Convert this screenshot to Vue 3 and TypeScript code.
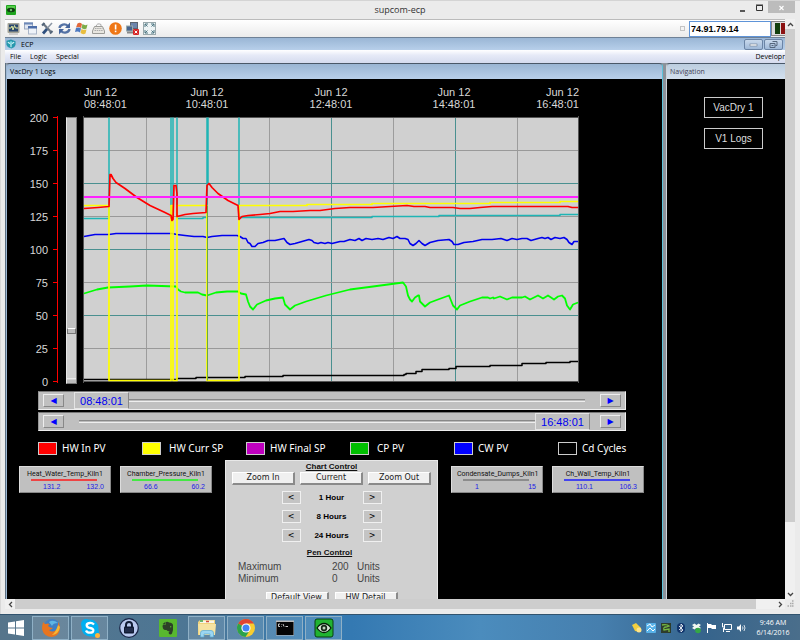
<script setup lang="ts">
import { ref } from 'vue'

interface Pen { name: string; low: string; high: string; color: string }
interface LegendItem { label: string; color: string; loose?: boolean }

const address = ref('74.91.79.14')
const zoomLevel = ref(19)
const startPos = ref(0)
const endPos = ref(100)

const menus = ['File', 'Logic', 'Special']
const tools = ['monitor', 'windows', 'tools', 'refresh', 'flag', 'keyboard', 'alert', 'disconnect', 'fullscreen']

const times = [
  { x: 84, hour: '08:48:01', anchor: 'start' },
  { x: 207, hour: '10:48:01', anchor: 'middle' },
  { x: 331, hour: '12:48:01', anchor: 'middle' },
  { x: 454, hour: '14:48:01', anchor: 'middle' },
  { x: 579, hour: '16:48:01', anchor: 'end' },
]
const levels = [200, 175, 150, 125, 100, 75, 50, 25, 0].map((value, i) => ({ value, y: 117 + i * 33 }))
const columns = [146, 207, 269, 331, 393, 455, 517]

const red = '84,208 98,207 109,206 110,174 111,174 113,178 116,182 125,188 137,197 150,205 165,212 171,215 172,220 173,219 174,185 176,185 177,193 177,216 185,214 193,213 206,212 207,185 209,183 212,187 218,193 228,200 238,205 239,219 242,216 248,215 260,214 270,213 280,211 293,211 310,210 320,210 335,208 350,207 373,207 390,206 407,205 414,206 425,206 430,207 453,207 460,208 470,208 480,207 492,206 540,206 568,206 572,207 578,207'
const blue = '84,236 95,234 109,234 116,233 172,233 177,234 185,235 194,236 203,236 207,237 212,236 222,235 237,235 240,236 243,238 246,238 248,242 250,243 252,246 255,246 258,243 263,242 268,240 275,240 284,238 287,242 290,244 295,243 302,241 309,239 312,240 314,242 318,243 321,242 325,243 328,242 332,243 340,241 344,241 350,239 355,240 359,238 362,240 366,238 372,239 378,238 383,239 389,237 393,238 397,236 400,238 405,238 408,239 410,243 413,245 416,243 419,240 422,243 425,245 430,242 438,240 449,239 452,241 454,244 458,244 464,242 473,241 482,239 492,239 501,238 507,240 512,238 517,239 522,238 527,238 531,240 538,238 542,237 545,238 548,237 551,239 555,237 560,238 564,237 567,239 569,242 572,244 574,241 578,241'
const green = '84,293 97,289 108,287 130,286 147,285 176,286 178,289 181,291 185,292 198,292 202,294 207,295 216,292 227,291 238,291 241,293 246,294 248,301 250,306 253,309 257,304 266,300 275,298 283,297 285,304 288,307 290,309 295,305 306,301 326,295 350,289 373,286 403,282 406,286 408,295 410,299 412,301 415,297 418,295 419,295 420,301 423,304 425,306 430,302 438,299 449,295 451,300 453,305 457,309 460,305 470,301 482,297 488,297 490,298 493,297 494,298 500,296 507,299 512,297 517,297 522,297 525,296 530,299 534,297 538,295 543,298 548,295 554,299 558,296 562,295 565,298 567,305 570,309 573,304 578,302'
const black = 'M84 379H177V378H196V377H245V376H283V375H404V374H406V373H416V371H422V369H449V368H456V366H490V365H522V363H546V362H570V361H578'
const cyan = 'M84 218H109V117M171 117V218M173 218V117M177 117V218H203V217H207V117M208 117V184M239 117V217H372V216H439V215H560V214H578'
const yellow = 'M84 205H109V380H171V205H173V380H177V205H207V380H239V205H307V204H372V203H490V202H560V201H578'

const legend: LegendItem[] = [
  { label: 'HW In PV', color: '#ff0000' },
  { label: 'HW Curr SP', color: '#ffff00', loose: true },
  { label: 'HW Final SP', color: '#bf00bf' },
  { label: 'CP PV', color: '#00bf00', loose: true },
  { label: 'CW PV', color: '#0000ff' },
  { label: 'Cd Cycles', color: '#000000' },
]
const leftPens: Pen[] = [
  { name: 'Heat_Water_Temp_Kiln1', low: '131.2', high: '132.0', color: '#ee4444' },
  { name: 'Chamber_Pressure_Kiln1', low: '66.6', high: '60.2', color: '#44e844' },
]
const rightPens: Pen[] = [
  { name: 'Condensate_Dumps_Kiln1', low: '1', high: '15', color: '#8c8c8c' },
  { name: 'Ch_Wall_Temp_Kiln1', low: '110.1', high: '106.3', color: '#4444ee' },
]
const spans = ['1 Hour', '8 Hours', '24 Hours']
const limits = [{ label: 'Maximum', value: 200 }, { label: 'Minimum', value: 0 }]
const apps = ['firefox', 'skype', 'lock', 'evernote', 'explorer', 'chrome', 'terminal', 'teamview']
const openApps = ['firefox', 'skype', 'explorer', 'chrome', 'terminal', 'teamview']
</script>

<template>
  <div class="desktop">
    <main class="window">
      <header class="titlebar">
        <svg class="app-icon" viewBox="0 0 10 10"><rect width="10" height="10" rx="1" fill="#1fa51f" /><rect x="1" y="1" width="8" height="3" fill="#58cf4c" /><ellipse cx="5" cy="5" rx="4" ry="2.2" fill="#123c12" /><circle cx="5" cy="5" r="1.2" fill="#6fbf6f" /></svg>
        <h1>supcom-ecp</h1>
        <div class="caption-buttons">
          <button aria-label="Minimize"><svg viewBox="0 0 9 9"><path d="M2 8H7" stroke="#333" stroke-width="1.6" /></svg></button>
          <button aria-label="Maximize"><svg viewBox="0 0 9 9"><path d="M1.5 2.5H7.5V7.5H1.5Z M1 2H8" fill="none" stroke="#333" /></svg></button>
          <button class="close" aria-label="Close"><svg viewBox="0 0 9 9"><path d="M2.5 3L6.5 7M6.5 3L2.5 7" stroke="#fff" stroke-width="1.1" /></svg></button>
        </div>
      </header>

      <div class="client">
        <div class="view">
          <div class="toolbar">
            <button v-for="tool in tools" :key="tool" class="tool" :aria-label="tool">
              <svg viewBox="0 0 13 13">
                <g v-if="tool === 'monitor'"><rect x="0.5" y="1" width="12" height="10" rx="1" fill="#a4a498" /><rect x="2" y="2.5" width="9" height="7" fill="#29466e" /><path d="M2 6H4L5 4L6 8L7.5 3.5L8.5 6H11" fill="none" stroke="#dfe8a0" /><path d="M2 12H11" stroke="#aaa" /></g>
                <g v-else-if="tool === 'windows'"><rect x="0.5" y="1" width="8" height="6" fill="#dfe6f2" stroke="#9aa8bf" /><rect x="0" y="0.5" width="9" height="2" fill="#6d88b8" /><rect x="4.5" y="5" width="8" height="7" fill="#eef2f8" stroke="#a9b5c8" /><rect x="4" y="4" width="9" height="2.5" fill="#4b6ca8" /></g>
                <g v-else-if="tool === 'tools'" fill="none"><path d="M2 1.5L10 10" stroke="#6b7684" stroke-width="2.2" /><path d="M11 1L6.5 6" stroke="#8a95a3" stroke-width="1.5" /><path d="M6 7L2 11.5" stroke="#2f507e" stroke-width="2.8" /><path d="M1 3.5L3.5 1M9 11.5L11.5 9" stroke="#536579" stroke-width="2" /></g>
                <g v-else-if="tool === 'refresh'" fill="none" stroke="#5573a5" stroke-width="2.4"><path d="M1.5 6C2 2.5 7 1 10 4" /><path d="M11.5 7C11 10.5 6 12 3 9" /><path d="M12 0.5V6H7Z M1 12.500V7H6Z" fill="#45659c" stroke="none" /></g>
                <g v-else-if="tool === 'flag'"><path d="M2.5 1.5Q5 0 7 2L6 6Q4 4.5 1 5.5Z" fill="#e2683a" /><path d="M7.5 2Q10 4 12.5 2.5L11.5 6.5Q9 8 6.5 6Z" fill="#7dac48" /><path d="M1 6Q4 5 6 6.5L5 10.5Q3 9 0 10Z" fill="#4b78c0" /><path d="M6.5 7Q9 8.5 11.5 7.5L10.5 11.5Q8 13 5.5 11Z" fill="#e8bd3e" /></g>
                <g v-else-if="tool === 'keyboard'"><path d="M4 4.5Q5 0.5 9 2.5V4" fill="none" stroke="#aaa" /><path d="M2.5 4.5H10.5L12.5 9V11.5H0.5V9Z" fill="#e8e6e0" stroke="#9c9c98" /><path d="M3 6.5H10.5M2.5 8.5H11" stroke="#aaa" stroke-dasharray="1.5 0.7" /></g>
                <g v-else-if="tool === 'alert'"><circle cx="6.5" cy="6.5" r="6.3" fill="#ef7716" /><rect x="5.8" y="2.5" width="1.6" height="5" fill="#fff" /><rect x="5.8" y="8.6" width="1.6" height="1.6" fill="#fff" /></g>
                <g v-else-if="tool === 'disconnect'"><rect x="4.5" y="0.5" width="7" height="6" fill="#6d86ae" stroke="#5d6570" /><rect x="0.5" y="4" width="6" height="5" fill="#48648f" stroke="#9aa" /><path d="M1 10.5H8" stroke="#888" stroke-width="2" /><rect x="7" y="7" width="6" height="6" rx="1" fill="#d62525" /><path d="M8.7 8.7L11.3 11.3M11.3 8.7L8.7 11.3" stroke="#fff" /></g>
                <g v-else><rect x="0.5" y="0.5" width="12" height="12" fill="#eef4f5" stroke="#9aa9ac" /><path d="M2 5V2H5M8 2H11V5M11 8V11H8M5 11H2V8M2 2L4.5 4.5M11 2L8.5 4.5M11 11L8.5 8.5M2 11L4.5 8.5" fill="none" stroke="#4b7480" /></g>
              </svg>
            </button>
            <input class="pin" type="checkbox" aria-label="Keep address">
            <input v-model="address" class="address" type="text" aria-label="Address">
            <span class="status"><i class="go" /><i class="stop" /></span>
          </div>

          <div class="ecpbar">
            <svg class="ecp-icon" viewBox="0 0 11 11"><path d="M0.5 2L5.5 0.5L10.5 2.5V6Q10 9 6 10.5Q1 9 0.5 6Z" fill="#2698ad" /><path d="M2 3.5L5.5 5.5L9 3.5M5.5 5.5V9" fill="none" stroke="#d5f4f7" stroke-width="1.2" /><circle cx="5.5" cy="4" r="1.4" fill="#7dd6e0" /></svg>
            <span>ECP</span>
            <div class="mdi-buttons">
              <button aria-label="Minimize child"><svg viewBox="0 0 9 7"><rect x="1" y="3" width="7" height="2" fill="#fff" stroke="#68788c" stroke-width="0.6" /></svg></button>
              <button aria-label="Restore child"><svg viewBox="0 0 9 7"><path d="M3.5 0.5H8V4.5H6.5M1 2.5H6V6.5H1ZM2.5 4.5H4.5" fill="none" stroke="#56677c" /></svg></button>
            </div>
          </div>

          <nav class="menubar">
            <a v-for="menu in menus" :key="menu" href="#">{{ menu }}</a>
            <span class="mode">Developr</span>
          </nav>

          <div class="workspace">
            <section class="pane logs">
              <h2>VacDry 1 Logs</h2>
              <div class="canvas">
                <div class="chart">
                  <svg class="axis" viewBox="27 79 36 310">
                    <g v-for="level in levels" :key="level.value">
                      <text x="48" :y="level.y + 5" text-anchor="end">{{ level.value }}</text>
                      <rect x="53" :y="level.y" width="4" height="1" fill="#f00" />
                    </g>
                    <rect x="57" y="116" width="1" height="267" fill="#f00" />
                  </svg>
                  <input v-model="zoomLevel" class="vslider" type="range" min="0" max="100" aria-label="Chart scale">
                  <svg class="plot" viewBox="82 79 500 310">
                    <g v-for="time in times" :key="time.hour" :text-anchor="time.anchor">
                      <text :x="time.x" y="96">Jun 12</text>
                      <text :x="time.x" y="108">{{ time.hour }}</text>
                    </g>
                    <rect x="84" y="117" width="495" height="265" fill="#d0d0d0" />
                    <g class="crisp">
                      <path v-for="(col, i) in columns" :key="col" :d="`M${col}.5 117V382`" :stroke="i % 2 ? '#4a9090' : '#9c9c9c'" />
                      <path v-for="(level, i) in levels" :key="level.y" :d="`M84 ${level.y}.5H579`" :stroke="i === 0 || i === 8 ? '#555' : i % 2 ? '#999' : '#4a9090'" />
                      <path d="M83.5 116V383M578.5 116V383" stroke="#555" />
                    </g>
                    <g class="trace" transform="translate(0 0.5)">
                      <path :d="black" stroke="#000" stroke-width="1.5" />
                      <path :d="cyan" stroke="#1fb5b5" stroke-width="1.5" />
                      <polyline :points="blue" stroke="#0000ee" stroke-width="1.6" />
                      <polyline :points="green" stroke="#00ff00" stroke-width="1.8" />
                      <path :d="yellow" stroke="#ffff00" stroke-width="1.7" />
                      <path d="M207.5 205V380" stroke="#69a843" />
                      <polyline :points="red" stroke="#ff0000" stroke-width="1.7" />
                      <path d="M84 196.5H578" stroke="#ff20ff" stroke-width="2" />
                    </g>
                  </svg>
                </div>

                <div class="ranges">
                  <div class="range">
                    <button aria-label="Earlier start">◀</button>
                    <div class="track">
                      <input v-model="startPos" type="range" min="0" max="100" aria-label="Chart start">
                      <output>08:48:01</output>
                    </div>
                    <button aria-label="Later start">▶</button>
                  </div>
                  <div class="range">
                    <button aria-label="Earlier end">◀</button>
                    <div class="track end">
                      <input v-model="endPos" type="range" min="0" max="100" aria-label="Chart end">
                      <output>16:48:01</output>
                    </div>
                    <button aria-label="Later end">▶</button>
                  </div>
                </div>

                <ul class="legend">
                  <li v-for="item in legend" :key="item.label" :class="{ loose: item.loose }">
                    <i :style="{ background: item.color }" />{{ item.label }}
                  </li>
                </ul>

                <div class="bottom">
                  <div class="pens">
                    <article v-for="pen in leftPens" :key="pen.name" class="pen">
                      <span>{{ pen.name }}</span>
                      <hr :style="{ background: pen.color }">
                      <p><b>{{ pen.low }}</b><b>{{ pen.high }}</b></p>
                    </article>
                  </div>
                  <section class="control">
                    <h3>Chart Control</h3>
                    <div class="buttons">
                      <button>Zoom In</button><button>Current</button><button>Zoom Out</button>
                    </div>
                    <div v-for="span in spans" :key="span" class="step">
                      <button :aria-label="`Back ${span}`">&lt;</button>
                      <strong>{{ span }}</strong>
                      <button :aria-label="`Forward ${span}`">&gt;</button>
                    </div>
                    <h3 class="pen-title">Pen Control</h3>
                    <div v-for="limit in limits" :key="limit.label" class="limit">
                      <span>{{ limit.label }}</span><span>{{ limit.value }}</span><span>Units</span>
                    </div>
                    <div class="buttons lower">
                      <button>Default View</button><button>HW Detail</button>
                    </div>
                  </section>
                  <div class="pens">
                    <article v-for="pen in rightPens" :key="pen.name" class="pen">
                      <span>{{ pen.name }}</span>
                      <hr :style="{ background: pen.color }">
                      <p><b>{{ pen.low }}</b><b>{{ pen.high }}</b></p>
                    </article>
                  </div>
                </div>
              </div>
            </section>

            <section class="pane navigation">
              <h2>Navigation</h2>
              <div class="canvas links">
                <button>VacDry 1</button>
                <button>V1 Logs</button>
              </div>
            </section>
          </div>
        </div>

        <div class="vscroll">
          <button aria-label="Scroll up"><svg viewBox="0 0 9 9"><path d="M2 6L4.5 3.5L7 6" /></svg></button>
          <div class="thumb" />
          <button aria-label="Scroll down"><svg viewBox="0 0 9 9"><path d="M2 3L4.5 5.5L7 3" /></svg></button>
        </div>
        <div class="hscroll">
          <button aria-label="Scroll left"><svg viewBox="0 0 9 9"><path d="M6 2L3.5 4.5L6 7" /></svg></button>
          <div class="thumb" />
          <button aria-label="Scroll right"><svg viewBox="0 0 9 9"><path d="M3 2L5.5 4.5L3 7" /></svg></button>
        </div>
        <svg class="grip" viewBox="0 0 10 10"><path d="M7 2H8.5M5 4.5H6.5M7 4.5H8.5M2.5 7H4M5 7H6.5M7 7H8.5" stroke="#aaa" stroke-width="1.5" /></svg>
      </div>
    </main>

    <footer class="taskbar">
      <button class="start" aria-label="Start"><svg viewBox="0 0 16 16"><path d="M0 2.5L7 1.5V7.5H0ZM8 1.3L16 0V7.5H8ZM0 8.5H7V14.5L0 13.5ZM8 8.5H16V16L8 14.7Z" fill="#fff" /></svg></button>
      <button v-for="app in apps" :key="app" class="task" :class="{ open: openApps.includes(app) }" :aria-label="app">
        <svg viewBox="0 0 20 20">
          <g v-if="app === 'firefox'"><circle cx="11" cy="9" r="8" fill="#3f7fc4" /><path d="M8 4Q12 1 17 5Q12 5 11 8Z" fill="#5fb6e4" /><path d="M2 4Q1 8 1 11Q3 19 11 19Q19 18 19 9Q19 6 17 4Q18 9 15 12Q11 15 8 12Q10 12 12 10Q9 10 7 8Q8 6 9 6Q6 5 5 6Q3 6 2 4Z" fill="#e8751f" /><path d="M19 9Q18 16 11 17Q15 14 17 7Z" fill="#f7b733" /></g>
          <g v-else-if="app === 'skype'"><circle cx="10" cy="10" r="8.5" fill="#00aff0" /><circle cx="6" cy="6" r="5" fill="#00aff0" /><circle cx="14" cy="14" r="5" fill="#00aff0" /><path d="M14 6.5Q12 4.5 9.5 5Q6.5 5.5 6.7 7.5Q7 9.3 10 10Q13.5 10.7 13.3 12.5Q13 14.7 10 14.7Q7 14.7 6 12.5" fill="none" stroke="#fff" stroke-width="2.3" /><circle cx="17.5" cy="17.5" r="2.5" fill="#ffb43b" /></g>
          <g v-else-if="app === 'lock'"><circle cx="10" cy="10" r="9.3" fill="#b9c9ef" stroke="#172344" stroke-width="1.2" /><path d="M7 9V7Q7 4 10 4Q13 4 13 7V9" fill="none" stroke="#111b34" stroke-width="2" /><rect x="5" y="8.5" width="10" height="7" rx="1" fill="#111b34" /><path d="M6 11H14M6 13H14" stroke="#4a5780" stroke-width="0.6" /></g>
          <g v-else-if="app === 'evernote'"><rect x="1" y="1" width="18" height="18" rx="1" fill="#58b82f" /><path d="M5 6.5H8V4Q10 3.5 11 4.5Q14.5 4.5 15 7Q15.5 12 14 15.5Q13 17 11 16Q10 13.5 12 13.5Q9 13 8.5 12Q6 12.5 5 10.5Q4 8 5 6.5Z" fill="#2d4028" /><path d="M4.7 6L7.5 3.7V6Z" fill="#2d4028" /><circle cx="12.7" cy="8.7" r="0.7" fill="#58b82f" /></g>
          <g v-else-if="app === 'explorer'"><path d="M1 4L3 2H18V17H1Z" fill="#f1d37b" /><rect x="3" y="2.5" width="14" height="2.5" fill="#f8f6e8" /><path d="M3 3H6" stroke="#37a24b" stroke-width="1.5" /><path d="M9 3.5H12" stroke="#d34a3a" stroke-width="1.5" /><path d="M1 6H19L18 17H2Z" fill="#f6e3a1" /><path d="M3.5 19V15Q3.5 12.5 6 12.5H14Q16.5 12.5 16.5 15V19H13V16H7V19Z" fill="#9bd6f2" stroke="#5aa9d3" stroke-width="0.7" /></g>
          <g v-else-if="app === 'chrome'"><circle cx="10" cy="10" r="9" fill="#f9cd2f" /><path d="M10 10L2.2 5.5A9 9 0 0 1 17.8 5.5H10Z" fill="#df4532" /><path d="M2.2 5.5A9 9 0 0 0 9.5 19L13.8 12.2L10 10Z" fill="#2ba24c" /><circle cx="10" cy="10" r="4.6" fill="#fff" /><circle cx="10" cy="10" r="3.5" fill="#4285f4" /></g>
          <g v-else-if="app === 'terminal'"><rect x="1" y="2.5" width="18" height="15" fill="#bcbcbc" /><rect x="1.5" y="4" width="17" height="13" fill="#050505" /><path d="M5 6H3.5V8.5H5M6.5 6.5V7M6.5 8V8.5M8 6L9 8.5M10.5 8.5H13" fill="none" stroke="#ddd" stroke-width="0.9" /></g>
          <g v-else><rect x="1" y="1" width="18" height="18" rx="2" fill="#20b331" stroke="#083e10" /><path d="M3 10Q6 5.5 10 5.5Q14 5.5 17 10Q14 14.5 10 14.5Q6 14.5 3 10Z" fill="#d9e9d9" stroke="#041d07" stroke-width="1.3" /><circle cx="10" cy="10" r="3.2" fill="#162a18" /><circle cx="10" cy="10" r="1.5" fill="#c0d4c0" /></g>
        </svg>
      </button>
      <svg class="tray" viewBox="0 0 114 12">
        <path d="M0 3L4 1L9 6L8 10L3 9Z" fill="#f3cf3f" /><circle cx="7" cy="8" r="2.5" fill="#ffe48a" />
        <rect x="14" y="1" width="10" height="10" rx="1" fill="#58b2e8" /><path d="M15 4L18 2L20 5L23 3M15 9L18 6L21 9L23 7" stroke="#fff" fill="none" />
        <rect x="29" y="1" width="10" height="10" fill="#2d3c2c" /><path d="M30 3Q35 2 37 4L34 5Q31 5 32 8L37 7V10" stroke="#76b843" stroke-width="1.3" fill="none" />
        <rect x="45" y="1" width="8" height="10" rx="4" fill="#12366d" /><path d="M47 4L51 8L49 10V2L51 4L47 8" stroke="#fff" stroke-width="0.8" fill="none" />
        <path d="M60 3L62.5 1.5L64.5 3L66.5 1.5L69 3L67 4.5L69 6L66.5 7.5L64.5 6L62.5 7.5L60 6L62 4.5Z" fill="#f1f7ef" /><circle cx="66" cy="8.5" r="2.8" fill="#35a745" />
        <path d="M75.5 1V11" stroke="#fff" /><path d="M76 2H79L80 3H84V7H80L79 6H76Z" fill="#fff" />
        <path d="M92.5 2.5H99.5V7.5H92.5ZM94 9.5H98M90.5 1V5H92M91.5 6V10" fill="none" stroke="#fff" />
        <path d="M105 4.5H107L109 2V10L107 7.5H105Z" fill="#fff" /><path d="M110.5 4.5Q111.5 6 110.5 7.5M112 3Q114 6 112 9" fill="none" stroke="#fff" stroke-width="0.8" />
      </svg>
      <time class="clock"><span>9:46 AM</span><span>6/14/2016</span></time>
    </footer>
  </div>
</template>

<style>
body { margin: 0; overflow: hidden; }
</style>

<style scoped>
* { box-sizing: border-box; }
button { padding: 0; margin: 0; border: 0; background: none; font: inherit; color: inherit; }
h1, h2, h3, p, ul { margin: 0; padding: 0; font-weight: normal; }
svg { display: block; }
.desktop { height: 100vh; display: flex; flex-direction: column; overflow: hidden; font-family: "Open Sans", "Noto Sans", sans-serif; font-size: 7px; color: #000; }
.window { flex: 1; min-height: 0; display: flex; flex-direction: column; background: #ebebeb; border-top: 1px solid #d4d4d4; border-left: 1px solid #d8d8d8; padding: 0 5px 5px 4px; }
.titlebar { height: 18px; flex: none; display: grid; grid-template-columns: 1fr auto 1fr; align-items: center; }
.app-icon { width: 10px; height: 10px; margin-left: 1px; }
.titlebar h1 { font-size: 9px; line-height: 18px; color: #333; }
.caption-buttons { display: flex; justify-self: end; align-self: start; height: 12px; }
.caption-buttons button { width: 17px; display: grid; place-items: center; }
.caption-buttons .close { width: 27px; background: #bcbcbc; }
.caption-buttons svg { width: 9px; height: 9px; }

.client { flex: 1; min-height: 0; display: grid; grid-template-columns: minmax(0, 1fr) 10px; grid-template-rows: minmax(0, 1fr) 10px; }
.view { min-height: 0; display: flex; flex-direction: column; overflow: hidden; }
.toolbar { height: 18px; flex: none; display: flex; align-items: center; gap: 4px; padding-left: 2px; background: linear-gradient(#fff, #ebebeb); border-top: 1px solid #bbb; }
.tool, .tool svg { width: 13px; height: 13px; }
.pin { appearance: none; width: 5px; height: 5px; margin: 0 0 0 auto; border: 1px solid #c4c4c4; background: #f4f4f4; }
.address { width: 82px; height: 16px; padding: 0 1px; border: 1px solid #5f94d8; background: #fff; font: bold 9px "Liberation Sans", sans-serif; color: #000; outline: 0; }
.status { width: 14px; height: 15px; display: flex; gap: 1px; align-items: center; padding-left: 3px; margin-left: -4px; border: 1px solid #888; border-right: 0; background: #ddd; overflow: hidden; }
.status i { flex: none; width: 5px; height: 11px; background: #123f0c; }
.status .stop { background: #8c1212; }

.ecpbar { height: 13px; flex: none; display: flex; align-items: center; gap: 5px; padding: 0 2px 0 1px; border-top: 1px solid #6f8196; background: linear-gradient(#9ab6d5, #b7cfea); }
.ecp-icon { width: 10px; height: 10px; }
.mdi-buttons { display: flex; gap: 1px; margin-left: auto; }
.mdi-buttons button { width: 19px; height: 11px; display: grid; place-items: center; border: 1px solid #6b84a5; border-radius: 2px; background: linear-gradient(#c9d9ec, #9fb9d8); }
.mdi-buttons svg { width: 9px; height: 7px; }
.menubar { height: 13px; flex: none; display: flex; align-items: center; gap: 9px; padding-left: 5px; background: linear-gradient(#fff, #e6eaf7 40%, #d5dbee); line-height: 12px; }
.menubar a { color: inherit; text-decoration: none; }
.mode { margin-left: auto; }

.workspace { flex: 1; min-height: 0; display: flex; background: #8b929b; border-left: 1px solid #5d7082; }
.pane { display: flex; flex-direction: column; min-height: 0; border-top: 1px solid #4a5868; border-left: 1px solid #9db8d4; border-radius: 4px 0 0 0; overflow: hidden; }
.logs { flex: 1; min-width: 0; border-right: 1px solid #5cc4dc; border-radius: 4px 4px 0 0; }
.navigation { width: 119px; margin-left: 3px; border-left: 1px solid #ccd3da; }
.pane h2 { height: 15px; flex: none; padding-left: 3px; font-size: 7px; line-height: 15px; background: linear-gradient(#9ab5d3, #b8cfe9); }
.navigation h2 { background: linear-gradient(#bccddf, #d3e0ee); color: #445; }
.canvas { flex: 1; min-height: 0; overflow: hidden; background: #000; }

.chart { display: flex; padding-left: 20px; height: 312px; font: 11px "Liberation Sans", sans-serif; }
.chart text { fill: #d8d8d8; }
.axis { width: 36px; height: 310px; }
.plot { width: 500px; height: 310px; margin-left: 5px; }
.crisp, .axis rect { shape-rendering: crispEdges; }
.trace { fill: none; stroke-linejoin: round; }
.vslider { appearance: none; writing-mode: vertical-lr; direction: rtl; width: 11px; height: 267px; margin: 38px 0 0 3px; border: 1px solid #777; border-left-color: #e8e8e8; background: linear-gradient(#bfbfbf 80%, #d0d0d0 80% 98%, #fff 98%, #bbb 99%); }
.vslider::-webkit-slider-thumb { appearance: none; width: 9px; height: 6px; background: #bdbdbd; border: 1px solid #777; border-top-color: #fff; }

.ranges { display: flex; flex-direction: column; gap: 2px; width: 588px; margin-left: 31px; }
.range { height: 19px; display: flex; align-items: center; gap: 10px; padding: 0 4px; background: #c0c0c0; border: 1px solid #eee; border-top-color: #777; border-left-color: #999; }
.range button { width: 21px; height: 13px; border: 1px solid #888; border-top-color: #eee; border-left-color: #eee; color: #00f; font: 8px "DejaVu Sans", sans-serif; line-height: 10px; }
.track { position: relative; flex: 1; height: 17px; color: #0000f0; font: 11px "Liberation Sans", sans-serif; }
.track input { appearance: none; display: block; width: 100%; height: 17px; margin: 0; background: linear-gradient(transparent 7px, #888 7px 8px, #bbb 8px 9px, #eee 9px 10px, transparent 10px) center / calc(100% - 10px) 100% no-repeat; }
.track input::-webkit-slider-thumb { appearance: none; width: 55px; height: 17px; background: #c0c0c0; border: 1px solid #e4e4e4; border-right-color: #888; }
.track output { position: absolute; top: 0; left: 0; width: 55px; line-height: 18px; text-align: center; }
.track.end output { left: auto; right: 0; }

.legend { list-style: none; display: grid; grid-template-columns: repeat(6, 104px); margin: 11px 0 5px 31px; height: 13px; font-family: "Noto Sans", sans-serif; font-size: 10px; line-height: 13px; color: #fff; }
.legend li { display: flex; gap: 5px; white-space: nowrap; }
.legend .loose { gap: 8px; }
.legend i { width: 19px; height: 13px; border: 1px solid #ccc; }

.bottom { display: flex; gap: 13px; align-items: flex-start; padding-left: 12px; }
.pens { display: flex; gap: 9px; padding-top: 6px; }
.pen { width: 92px; height: 27px; padding: 4px 5px 0; border: 1px solid #888; border-top-color: #ddd; border-left-color: #ddd; background: #c0c0c0; font: 7px Roboto, "Liberation Sans", sans-serif; line-height: 7px; white-space: nowrap; }
.pen span { display: block; color: #111; text-align: center; }
.pen hr { width: 66px; height: 2px; margin: 1px 0 2px 6px; border: 0; }
.pen p { display: flex; justify-content: space-between; padding: 0 1px 0 18px; font-family: "Liberation Sans", sans-serif; }
.pen b { font-weight: normal; color: #1a1ae6; }

.control { width: 213px; padding: 1px 6px 0; border: 1px solid #e8e8e8; border-bottom: 0; background: #d0d0d0; font: 8px "DejaVu Sans", sans-serif; }
.control h3 { font: bold 8px "Liberation Sans", sans-serif; line-height: 10px; text-align: center; text-decoration: underline; color: #111; }
.buttons { display: flex; justify-content: space-between; }
.buttons button { width: 63px; height: 13px; line-height: 10px; background: #f0f0f0; border: 1px solid #fff; border-right: 2px solid #8a8a8a; border-bottom: 2px solid #8a8a8a; color: #222; }
.step { display: flex; align-items: center; justify-content: center; height: 13px; margin-top: 6px; }
.step button { width: 19px; height: 13px; border: 1px solid #f0f0f0; background: #c4c4c4; line-height: 10px; }
.step strong { width: 62px; font: bold 8px "Liberation Sans", sans-serif; text-align: center; }
.control .pen-title { margin: 6px 4px 3px 0; }
.limit { display: grid; grid-template-columns: 94px 25px 40px; font: 10px "Liberation Sans", sans-serif; line-height: 12px; padding-left: 6px; color: #444; }
.buttons.lower { justify-content: center; gap: 6px; margin-top: 7px; }

.links { display: flex; flex-direction: column; align-items: center; gap: 10px; padding: 18px 0 0 15px; }
.links button { width: 59px; height: 21px; border: 1px solid #ccc; background: #000; color: #ddd; font: 10px "Liberation Sans", sans-serif; }

.vscroll, .hscroll { display: flex; background: #f0f0f0; }
.vscroll { flex-direction: column; justify-content: space-between; }
.vscroll button, .hscroll button { width: 10px; height: 10px; display: grid; place-items: center; }
.vscroll svg, .hscroll svg { width: 9px; height: 9px; }
.vscroll path, .hscroll path { fill: none; stroke: #444; stroke-width: 1.3; }
.vscroll .thumb { flex: 0 0 85%; margin-bottom: auto; background: #cdcdcd; }
.hscroll { justify-content: space-between; }
.hscroll .thumb { flex: 0 0 95%; margin-right: auto; background: #cdcdcd; }
.grip { width: 10px; height: 10px; }

.taskbar { height: 26px; flex: none; display: flex; align-items: center; padding-right: 10px; border-top: 1px solid #31536e; background: linear-gradient(90deg, #56758b 0%, #4c7695 25%, #377bb0 38%, #3479b2 44%, #4b8cbd 60%, #467fae 75%, #36648c 88%, #4a6e8b 100%); }
.start { width: 32px; height: 25px; display: grid; place-items: center; }
.start svg { width: 16px; height: 16px; }
.task { width: 37px; height: 24px; margin-right: 2px; display: grid; place-items: center; border: 1px solid transparent; }
.task.open { border-color: #8fb0c6; background: rgba(255, 255, 255, 0.13); }
.task svg { width: 20px; height: 20px; }
.tray { width: 114px; height: 12px; margin-left: auto; }
.clock { width: 34px; margin-left: 10px; display: flex; flex-direction: column; align-items: center; gap: 1px; color: #fff; line-height: 9px; }
</style>
